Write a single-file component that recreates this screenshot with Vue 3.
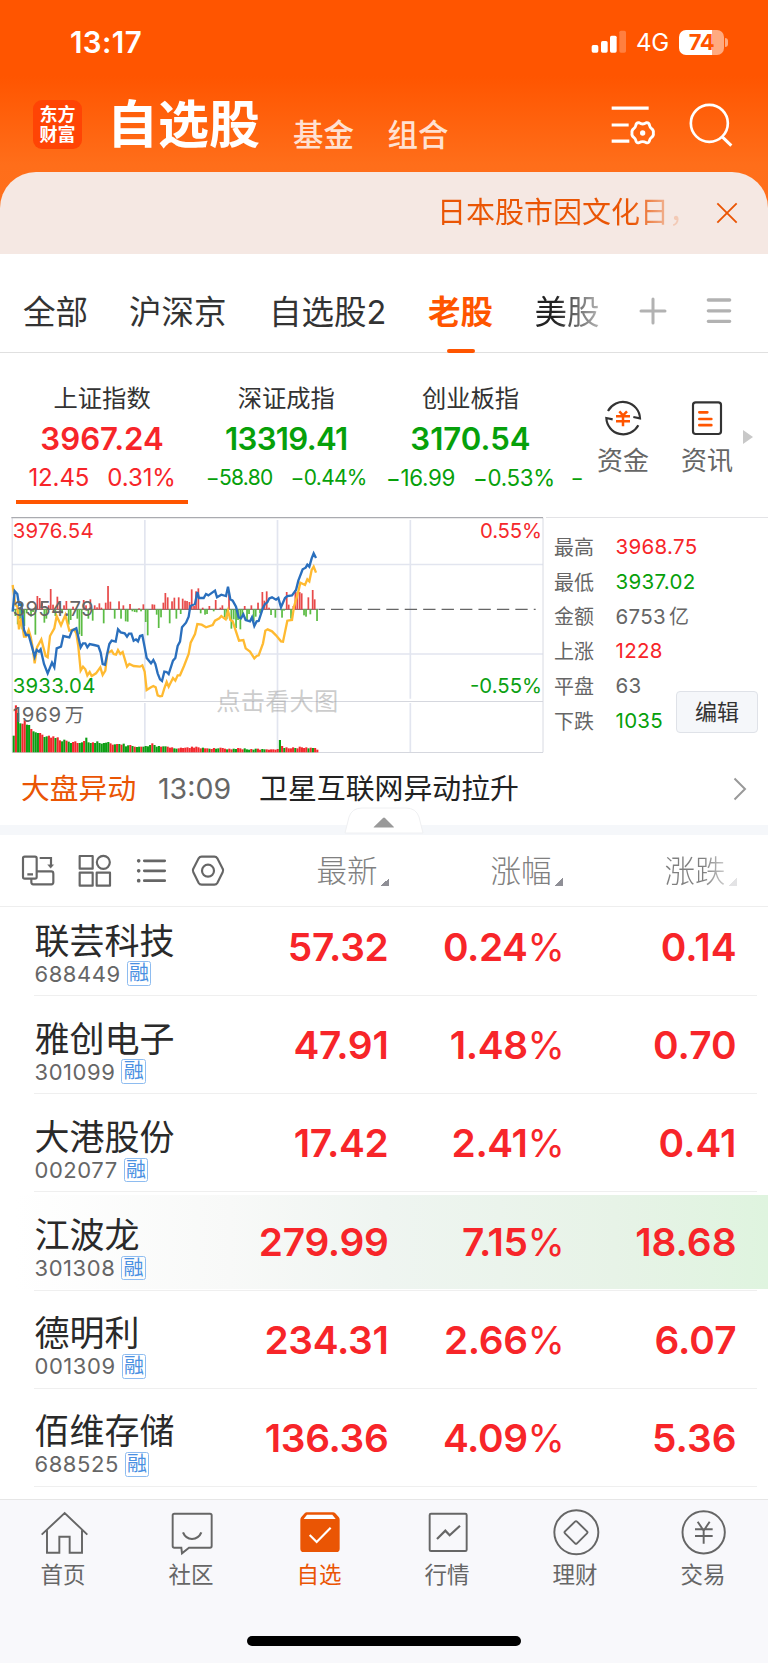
<script setup>
const tabs = [
  { label: '全部', cls: 't1' },
  { label: '沪深京', cls: 't2' },
  { label: '自选股2', cls: 't3' },
  { label: '老股', cls: 't4 active' },
  { label: '美股', cls: 't5 fade' },
]
const indices = [
  { name: '上证指数', value: '3967.24', diff: '12.45', pct: '0.31%', cls: 'up current' },
  { name: '深证成指', value: '13319.41', diff: '−58.80', pct: '−0.44%', cls: 'down small' },
  { name: '创业板指', value: '3170.54', diff: '−16.99', pct: '−0.53%', cls: 'down mid' },
]
const stats = [
  { k: '最高', v: '3968.75', c: 'up' },
  { k: '最低', v: '3937.02', c: 'down' },
  { k: '金额', v: '6753', u: '亿', c: '' },
  { k: '上涨', v: '1228', c: 'up' },
  { k: '平盘', v: '63', c: '' },
  { k: '下跌', v: '1035', c: 'down' },
]
const stocks = [
  { name: '联芸科技', code: '688449', price: '57.32', pct: '0.24', diff: '0.14' },
  { name: '雅创电子', code: '301099', price: '47.91', pct: '1.48', diff: '0.70' },
  { name: '大港股份', code: '002077', price: '17.42', pct: '2.41', diff: '0.41' },
  { name: '江波龙', code: '301308', price: '279.99', pct: '7.15', diff: '18.68', flash: true },
  { name: '德明利', code: '001309', price: '234.31', pct: '2.66', diff: '6.07' },
  { name: '佰维存储', code: '688525', price: '136.36', pct: '4.09', diff: '5.36' },
]

// Intraday chart, drawn in a 3x coordinate space
const blue = '38,305 44,243 52,252 57,285 64,282 72,360 78,375 86,375 104,440 110,420 117,425 122,418 132,462 143,490 156,458 163,472 170,415 183,410 190,378 208,382 216,362 229,355 242,412 249,400 256,400 262,412 269,402 282,405 295,408 302,428 308,462 315,464 322,430 328,402 335,392 347,395 354,358 362,367 374,370 381,380 387,371 394,371 401,392 408,388 414,394 420,378 427,376 434,412 440,444 453,460 460,450 466,462 473,490 480,508 486,513 493,485 500,486 506,492 519,452 526,444 533,408 540,395 546,352 558,338 566,320 571,288 585,282 592,246 597,264 611,264 618,252 625,256 645,242 651,262 664,254 678,258 684,230 691,268 698,272 708,290 716,322 723,325 730,313 737,330 750,334 756,322 763,348 770,334 776,333 789,293 795,282 802,277 808,265 816,262 828,269 835,264 843,292 855,264 862,258 876,256 888,240 895,212 908,178 917,173 922,164 928,170 935,145 941,130 948,144'
const yellow = '38,225 46,285 52,290 57,358 64,325 72,380 78,380 86,360 92,380 98,412 104,460 111,412 124,388 137,438 143,442 150,378 163,355 170,318 183,346 196,315 208,362 222,358 229,370 235,410 242,482 249,470 256,478 262,496 269,486 275,498 288,490 301,472 308,495 316,482 322,430 335,422 341,432 348,434 354,420 361,432 368,426 381,470 388,462 401,468 420,470 427,466 434,485 440,540 453,532 460,528 467,532 473,556 480,559 486,558 493,535 500,516 506,530 519,504 526,512 533,496 540,496 552,468 566,432 572,398 585,372 592,342 605,344 618,352 638,345 645,332 658,325 664,318 677,328 684,302 691,330 698,334 717,392 730,390 737,415 750,425 763,445 770,438 776,436 789,400 796,362 803,358 816,364 828,376 843,394 849,395 862,332 876,330 882,290 895,245 901,218 915,225 922,208 928,214 935,180 941,170 948,188'

const momentum = [
  [46, -20], [53, -45], [60, -30], [67, -60], [73, -50], [80, -12], [93, -22], [99, -8], [106, -76], [112, 40], [119, 34], [126, 20],
  [133, -40], [139, -28], [146, 12], [152, 61], [159, 14], [166, -20], [172, 38], [179, 20], [186, -12], [192, 12], [199, 25], [206, -46],
  [212, -32], [219, 8], [232, -28], [238, -75], [245, -80], [251, 28], [258, 12], [265, -28], [271, 30], [278, -34], [284, 12], [291, 6],
  [298, 18], [304, 5], [311, -42], [317, 20], [324, 70], [331, 23], [344, -28], [357, 24], [363, -28], [370, 12], [377, -36], [383, -37],
  [390, 16], [397, -6], [404, -8], [410, -9], [417, 3], [423, -6], [430, 15], [437, -38], [443, -78], [457, 15], [463, 14], [470, -16],
  [476, -56], [483, -24], [490, 20], [496, 49], [503, 36], [509, -42], [516, 24], [523, 35], [529, -28], [536, 36], [542, -14], [548, 32],
  [555, 26], [561, 25], [568, 22], [575, 60], [582, 10], [588, 54], [595, 63], [602, -12], [608, 5], [615, -16], [621, -14], [628, 10],
  [641, -6], [647, 28], [661, 5], [667, 12], [674, -24], [680, -30], [687, 46], [694, -58], [701, -30], [708, -56], [714, -32], [721, -60],
  [727, -22], [734, 10], [741, -32], [747, -14], [754, 12], [761, -36], [767, -22], [774, 20], [780, -12], [787, 52], [793, 26], [800, 54],
  [807, 5], [813, -17], [826, -25], [846, -25], [852, -4], [860, 52], [866, 14], [873, -28], [880, 10], [886, 58], [892, 52], [899, 52],
  [905, 48], [912, -18], [918, -22], [925, 36], [931, -15], [938, 58], [944, 30], [951, -35],
].map(([x, v]) => ({ x: x - 2.5, y: v > 0 ? 298 - v : 298, h: Math.abs(v), c: v > 0 ? '#e84a4a' : '#5cbc44' }))

// Volume heights; the colour codes run in parallel
const volumeHeights = [50, 141, 118, 87, 86, 96, 83, 82, 70, 63, 60, 58, 58, 53, 46, 48, 50, 44, 48, 43, 45, 36, 33, 38, 35, 32, 28, 31, 33, 28, 28, 30, 34, 44, 30, 28, 30, 28, 33, 28, 26, 28, 29, 31, 27, 23, 24, 25, 25, 23, 26, 18, 21, 22, 19, 17, 16, 17, 17, 17, 19, 18, 22, 27, 22, 17, 19, 17, 18, 18, 17, 14, 15, 12, 11, 12, 14, 13, 14, 15, 13, 17, 14, 17, 15, 12, 14, 12, 12, 11, 10, 13, 11, 12, 14, 13, 11, 9, 11, 9, 11, 10, 13, 12, 9, 12, 9, 8, 10, 8, 11, 11, 8, 10, 9, 9, 8, 9, 9, 8, 10, 37, 19, 13, 15, 12, 12, 15, 13, 12, 17, 15, 13, 15, 12, 14, 13, 13, 8]
const volumeColors = 'grggrrggrgggrrggrrrgrrggrggrrrggrgggrgggggggrrgrgrgggrgrggrggggrgggrggrrrggrrrrrrrrrrrgrrgrrggrrrgrrggrrrgggrggrrggrrrrrrgrgrrrrgrrrrrgrgrrg'
const volume = volumeHeights.map((h, i) => ({
  x: 38 + i * 6.6,
  y: 727 - h,
  h,
  c: volumeColors[i] === 'g' ? '#0b9d12' : '#f2282c',
}))
</script>

<template>
  <div class="page">
    <header class="top">
      <div class="status">
        <span class="clock">13:17</span>
        <div class="signal">
          <svg width="36" height="26" viewBox="0 0 108 78">
            <g fill="#fff">
              <rect x="2" y="48" width="20" height="23" rx="5" />
              <rect x="30" y="36" width="20" height="35" rx="5" />
              <rect x="57" y="20" width="20" height="51" rx="5" />
              <rect x="85" y="5" width="20" height="66" rx="5" opacity=".25" />
            </g>
          </svg>
          <span class="net">4G</span>
          <div class="battery"><b>74</b></div>
          <i class="cap"></i>
        </div>
      </div>
      <div class="titlebar">
        <div class="logo"><span>东方</span><span>财富</span></div>
        <h1>自选股</h1>
        <span class="sub s1">基金</span>
        <span class="sub s2">组合</span>
        <svg class="ic-set" width="46" height="44" viewBox="682 310 138 132" fill="none" stroke="#fff" stroke-width="9.500">
          <path d="M684 325.500H795M684 376H735M684 424.500H737" />
          <path stroke-width="8.500" stroke-linejoin="round" d="M766 369Q777 377 788 369Q796 368 798 378Q799 383 803 386Q811 392 809 400Q811 408 803 414Q799 417 798 421Q796 432 788 429Q777 423 766 429Q758 432 756 421Q755 417 751 414Q743 408 745 400Q743 392 751 386Q755 383 756 378Q758 368 766 369Z" />
          <circle cx="777" cy="400" r="8" fill="#fff" stroke="none" />
        </svg>
        <svg class="ic-search" width="44" height="44" viewBox="916 308 132 132" fill="none" stroke="#fff" stroke-width="8">
          <circle cx="977" cy="369" r="55.500" /><path d="M1015 409L1043 436" stroke-width="9" />
        </svg>
      </div>
    </header>

    <div class="notice">
      <span class="notice-text">日本股市因文化日，</span>
      <svg width="22" height="22" viewBox="0 0 66 66" stroke="#ea5504" stroke-width="5.500"><path d="M4 4L62 62M62 4L4 62" /></svg>
    </div>

    <nav class="tabs">
      <span v-for="t in tabs" :key="t.label" class="tab" :class="t.cls">{{ t.label }}</span>
      <svg class="plus" width="28" height="28" viewBox="0 0 84 84" stroke="#b2b2b2" stroke-width="9" stroke-linecap="round"><path d="M6 42H78M42 6V78" /></svg>
      <svg class="menu" width="26" height="28" viewBox="0 0 78 84" stroke="#b2b2b2" stroke-width="10" stroke-linecap="round"><path d="M7 9H71M7 41.500H71M7 73H71" /></svg>
    </nav>

    <section class="indices">
      <div class="index-list">
        <div v-for="x in indices" :key="x.name" class="index" :class="x.cls">
          <span class="iname">{{ x.name }}</span>
          <b class="ival">{{ x.value }}</b>
          <div class="ichg"><span>{{ x.diff }}</span><span>{{ x.pct }}</span></div>
        </div>
        <div class="index peek down"><div class="ichg"><span>−</span></div></div>
      </div>
      <div class="shortcut sc1">
        <svg width="40" height="40" viewBox="658 414 120 120" fill="none" stroke="#333" stroke-width="6.500">
          <path d="M673 453A51 51 0 0 1 769 475L749 471" />
          <path d="M764 496A51 51 0 0 1 668 474L687 478" />
          <path stroke="#ff5500" stroke-width="7.500" d="M707 454L718 466L730 454M697 469H739M697 484H739M718 466V499" />
        </svg>
        <span>资金</span>
      </div>
      <div class="shortcut sc2">
        <svg width="40" height="40" viewBox="910 414 120 120" fill="none" stroke="#333" stroke-width="6.500">
          <rect x="928" y="427" width="84" height="95" rx="8" />
          <path stroke="#ff5500" stroke-width="8" stroke-linecap="round" d="M947 457H971M947 477H983M947 495.500H983" />
        </svg>
        <span>资讯</span>
      </div>
      <svg class="more" width="10" height="14" viewBox="0 0 10 14"><path d="M0 0L10 7L0 14Z" fill="#c8c8c8" /></svg>
    </section>

    <section class="market">
      <svg class="chart" width="546" height="238" viewBox="0 21 1638 714">
        <g fill="none" stroke="#e2e5ef" stroke-width="5">
          <path d="M36 163.500H1629M36 432H1629" />
          <path d="M434.500 30V566M832.500 30V566M1231 30V566M434.500 579V727M832.500 579V727M1231 579V727" />
          <path d="M36.500 23V727M1629 23V727" stroke="#d8dae2" stroke-width="3" />
          <path d="M36 574.500H1629M36 727.500H1629" stroke="#d5d7de" stroke-width="3" />
        </g>
        <path d="M34 23H1629" stroke="#aaabb0" stroke-width="4" />
        <path d="M38 298H955" stroke="#777" stroke-width="3.500" />
        <path d="M978 298H1629" stroke="#666" stroke-width="3.500" stroke-dasharray="37 18.300" stroke-dashoffset="18.300" transform="translate(-22 0)" />
        <rect v-for="(b, i) in momentum" :key="'m' + i" :x="b.x" :y="b.y" width="5.200" :height="b.h" :fill="b.c" />
        <rect v-for="(b, i) in volume" :key="'v' + i" :x="b.x" :y="b.y" width="6.300" :height="b.h" :fill="b.c" />
        <g fill="none" stroke-width="7" stroke-linejoin="miter">
          <polyline :points="yellow" stroke="#ffba31" />
          <polyline :points="blue" stroke="#2a6fbd" />
        </g>
        <g class="labels" font-size="61">
          <text x="38" y="84" textLength="243" fill="#f5282c">3976.54</text>
          <text x="38" y="319" textLength="243" fill="#666">3954.79</text>
          <text x="38" y="550" textLength="248" fill="#0ba012">3933.04</text>
          <text x="38" y="637" textLength="145" fill="#666">1969</text>
          <text x="194" y="637" font-size="58" fill="#666">万</text>
          <text x="1440" y="84" textLength="186" fill="#f5282c">0.55%</text>
          <text x="1410" y="550" textLength="216" fill="#0ba012">-0.55%</text>
          <text x="649" y="600" font-size="73" textLength="366" fill="#9a9a9a" fill-opacity=".5">点击看大图</text>
        </g>
      </svg>
      <div class="stats">
        <div v-for="s in stats" :key="s.k" class="stat">
          <span class="k">{{ s.k }}</span><span class="v" :class="s.c">{{ s.v }}<em v-if="s.u">{{ s.u }}</em></span>
        </div>
        <button class="edit">编辑</button>
      </div>
    </section>

    <div class="ticker">
      <span class="tk-tag">大盘异动</span>
      <span class="tk-time">13:09</span>
      <span class="tk-text">卫星互联网异动拉升</span>
      <svg width="14" height="24" viewBox="0 0 14 24" fill="none" stroke="#999" stroke-width="2"><path d="M1.500 1.500L12 12L1.500 22.500" /></svg>
    </div>
    <div class="band">
      <svg class="handle" width="80" height="27" viewBox="0 0 80 27">
        <path d="M1 26L5 10Q8 1 18 1H62Q72 1 75 10L79 26Z" fill="#fff" stroke="#eff0f2" stroke-width="1" />
        <path d="M30 19.700Q29 20.500 30 20.500H49.500Q50.500 20.500 49.500 19.500L41 11Q40 10 39 11Z" fill="#999" />
      </svg>
    </div>

    <div class="toolbar">
      <div class="tools">
        <svg width="40" height="70" viewBox="57 255 120 210"><path d="M74 320H105Q110 320 110 325V381Q110 386 105 386H74Q69 386 69 381V325Q69 320 74 320ZM82 373H99M94 388V397Q94 403 100 403H154Q160 403 160 397V371Q160 364 154 364H112M119 324H153V350" /><path d="M143 344L152 355L161 344Z" fill="#666" stroke-width="1" /></svg>
        <svg width="40" height="70" viewBox="225 255 120 210"><path d="M239 318H278V356H239ZM239 368H278V407H239ZM290 368H330V407H290Z" stroke-linejoin="round" /><circle cx="310" cy="337" r="19.500" /></svg>
        <svg width="40" height="70" viewBox="396 255 120 210"><path d="M433 332.500H494M433 362.500H494M433 392H494" stroke-width="8.500" stroke-linecap="round" /><path d="M416 332.500H416.100M416 362.500H416.100M416 392H416.100" stroke-width="11" stroke-linecap="round" /></svg>
        <svg width="40" height="70" viewBox="563 255 120 210"><path d="M604 320H642Q648 320 651 325L667 356Q670 361 667 367L651 399Q648 404 642 404H604Q598 404 595 399L579 367Q576 361 579 356L595 325Q598 320 604 320Z" /><circle cx="623" cy="362" r="18" /></svg>
      </div>
      <div class="col c1">最新<i></i></div>
      <div class="col c2">涨幅<i></i></div>
      <div class="col c3">涨跌<i></i></div>
    </div>

    <main class="list">
      <div v-for="s in stocks" :key="s.code" class="row" :class="{ flash: s.flash }">
        <div class="who">
          <span class="name">{{ s.name }}</span>
          <div class="meta"><span class="code">{{ s.code }}</span><span class="badge">融</span></div>
        </div>
        <b class="num n1">{{ s.price }}</b>
        <b class="num n2">{{ s.pct }}<span class="pc">%</span></b>
        <b class="num n3">{{ s.diff }}</b>
      </div>
    </main>

    <footer class="bottom">
      <div class="navs">
        <div class="nav">
          <svg viewBox="0 30 384 180"><path d="M125 134L194 69L262 134M141 121V188H178V140H209V188H246V121" /></svg><span>首页</span>
        </div>
        <div class="nav">
          <svg viewBox="0 30 384 180"><path d="M139 71H246Q251 71 251 76V168Q251 173 246 173H183L162 190L160 173H139Q134 173 134 168V76Q134 71 139 71Z" /><path d="M165 127Q173 146 192 147Q212 146 220 127" stroke-width="6.500" /></svg><span>社区</span>
        </div>
        <div class="nav on">
          <svg viewBox="0 30 384 180"><path d="M152 67H231Q235 67 238 70L248 81Q251 84 251 90V176Q251 186 241 186H143Q133 186 133 176V90Q133 84 136 81L146 70Q149 67 152 67Z" fill="#ea5504" stroke="none" /><path d="M153 74H229L239 87H143Z" fill="#fff" stroke="none" /><path d="M161 135L182 156L224 113" stroke="#fff" stroke-width="6.500" /></svg><span>自选</span>
        </div>
        <div class="nav">
          <svg viewBox="0 30 384 180"><rect x="137" y="71" width="111" height="112" rx="4" /><path d="M159 147L184 122L197 136L228 107" stroke-width="6.500" /></svg><span>行情</span>
        </div>
        <div class="nav">
          <svg viewBox="0 30 384 180"><circle cx="193" cy="127" r="66" /><path d="M189 95Q192 92 195 95L225 124Q228 127 225 130L195 160Q192 163 189 160L159 130Q156 127 159 124Z" /></svg><span>理财</span>
        </div>
        <div class="nav">
          <svg viewBox="0 30 384 180"><circle cx="191" cy="127" r="63.500" /><path d="M173 95L191 122L209 95M165 118H218M165 138H218M191 122V161" /></svg><span>交易</span>
        </div>
      </div>
      <div class="home"></div>
    </footer>
  </div>
</template>

<style>
body {
  background: #fff;
}
</style>

<style scoped>
.page {
  width: 768px;
  height: 1663px;
  display: flex;
  flex-direction: column;
  overflow: hidden;
  background: #fff;
  color: #333;
  font-family: Inter, "Noto Sans CJK SC", sans-serif;
  font-weight: 400;
  white-space: nowrap;
}
.page * { box-sizing: border-box; }
svg { display: block; flex: none; }
.up { color: #f72529; }
.down { color: #06a00a; }

.top {
  flex: none;
  height: 215px;
  margin-bottom: -43.500px;
  background: linear-gradient(#ff5500 0, #ff5500 76px, #ff6e1a 165px, #ff701c 215px);
  color: #fff;
}
.status { height: 84px; display: flex; align-items: center; justify-content: space-between; padding: 0 44px 0 70px; }
.clock { font-size: 29.500px; font-weight: 600; letter-spacing: .4px; }
.signal { display: flex; align-items: center; }
.net { font-size: 24px; margin-left: 9px; width: 33px; font-weight: 400; letter-spacing: -.3px; line-height: 26px; padding-top: 2px; }
.battery {
  width: 45px; height: 25px; margin-left: 10px; border-radius: 7px;
  background: linear-gradient(90deg, #fff 33px, #ffaa80 33px);
  color: #ff5500; font-size: 22px; line-height: 25px; text-align: center; letter-spacing: -.5px;
}
.battery b { font-weight: 700; }
.cap { width: 3px; height: 9px; margin-left: 1px; margin-right: -4px; border-radius: 0 4px 4px 0; background: #ffaa80; }
.titlebar { display: flex; height: 88px; padding-left: 33px; align-items: flex-start; }
.logo {
  width: 49px; height: 49px; margin-top: 16px; border-radius: 9px; background: #ff4405;
  display: flex; flex-direction: column; align-items: center; justify-content: center;
}
.logo span { font-size: 18px; line-height: 20px; font-weight: 700; }
h1 { margin: 11px 0 0 25px; width: 161px; font-size: 51px; line-height: 60px; font-weight: 700; letter-spacing: 0; }
.sub { font-size: 30.500px; line-height: 40px; margin-top: 31px; color: #ffe1d2; font-weight: 500; }
.s1 { margin-left: 25px; width: 94.500px; }
.s2 { width: 61px; }
.ic-set { margin: 19px 0 0 162.500px; }
.ic-search { margin: 19px 0 0 32px; }

.notice {
  flex: none; height: 82px; border-radius: 36px 36px 0 0; background: #f5e8e3;
  display: flex; align-items: center; padding-left: 437px;
}
.notice-text {
  width: 262px; margin-right: 17px; font-size: 29px; line-height: 40px; font-weight: 400;
  color: transparent; background: linear-gradient(90deg, #ea5504 195px, rgba(234, 85, 4, .2) 238px); background-clip: text;
}

.tabs { flex: none; height: 99px; border-bottom: 1px solid #e0e0e0; display: flex; align-items: flex-start; padding-left: 23px; }
.tab { font-size: 32.500px; line-height: 44px; margin-top: 37px; height: 62px; color: #333; }
.t1 { width: 106px; }
.t2 { width: 140px; }
.t3 { width: 159px; }
.t4 { width: 106.500px; }
.t5 { width: 66px; }
.active { color: #ff5500; font-weight: 700; position: relative; }
.active::after { content: ""; position: absolute; left: 19px; bottom: 0; width: 28px; height: 4px; border-radius: 2px; background: #ff5500; }
.fade { color: transparent; background: linear-gradient(90deg, #222 20px, #bbb 66px); background-clip: text; }
.plus { margin: 43.500px 0 0 38.500px; }
.menu { margin: 43.500px 0 0 38.500px; }

.indices { flex: none; height: 164.500px; display: flex; }
.index-list { width: 583px; display: flex; overflow: hidden; padding-left: 10px; }
.index { width: 184.200px; flex: none; display: flex; flex-direction: column; align-items: center; height: 152px; padding-top: 29px; }
.current { background: linear-gradient(#ff5500, #ff5500) 6px 147.500px / 172px 4px no-repeat; }
.iname { font-size: 24.300px; line-height: 32px; color: #333; }
.ival { font-size: 31.200px; line-height: 38px; margin-top: 6px; font-weight: 600; }
.ichg { display: flex; gap: 18px; font-size: 24px; line-height: 30px; margin-top: 5px; }
.current .ichg { letter-spacing: -.1px; }
.small .ival { letter-spacing: -.7px; }
.small .ichg { font-size: 21px; letter-spacing: -.7px; }
.mid .ichg { font-size: 22.300px; letter-spacing: -.3px; }
.peek { align-items: flex-start; width: 30px; padding: 105px 0 0 8px; }
.peek .ichg { font-size: 20px; }
.shortcut { display: flex; flex-direction: column; align-items: center; width: 80px; padding-top: 45.500px; }
.shortcut span { font-size: 26px; line-height: 34px; margin-top: 6px; color: #666; }
.sc2 { margin-left: 4px; }
.more { margin: 77px 0 0 -4px; }

.market { flex: none; height: 237px; display: flex; }
.chart text { font-family: Inter, "Noto Sans CJK SC", sans-serif; }
.stats { flex: 1; position: relative; border-top: 1px solid #e3e3e6; padding: 11px 0 0 8px; }
.stat { display: flex; height: 34.800px; align-items: center; font-size: 20px; color: #666; }
.k { width: 61.500px; }
.v { font-size: 20.500px; letter-spacing: .3px; }
.v em { font-style: normal; margin-left: 3px; font-size: 20px; }
.edit {
  position: absolute; left: 130px; top: 173px; width: 82px; height: 42px; padding: 0; border: 1.500px solid #dfe2e8;
  border-radius: 4px; background: #f5f7fa; color: #333; font: 400 22px/36px Inter, "Noto Sans CJK SC", sans-serif;
}

.ticker { flex: none; height: 71px; display: flex; align-items: center; padding: 0 0 2px 21px; line-height: 40px; }
.tk-tag { font-size: 28.800px; width: 137px; color: #ea5504; }
.tk-time { font-size: 28.500px; width: 101px; color: #666; }
.tk-text { font-size: 28.900px; width: 474px; color: #222; }
.band { flex: none; height: 10px; background: #f5f7fa; position: relative; }
.handle { position: absolute; left: 344px; top: -18.500px; }

.toolbar { flex: none; height: 71.500px; border-bottom: 1px solid #eee; display: flex; padding-left: 19px; }
.tools { display: flex; gap: 16.300px; width: 297.500px; flex: none; }
.tools svg { fill: none; stroke: #666; stroke-width: 6.500; }
.col { flex: none; width: 174px; font-size: 30.500px; line-height: 40px; padding-top: 16px; color: #808080; display: flex; font-weight: 300; }
.col i { width: 8px; height: 8px; margin: 27px 0 0 3px; background: linear-gradient(135deg, transparent 50%, #8f8f96 50%); }
.c3 { width: 90px; color: transparent; background: linear-gradient(90deg, #808080 38px, #d8d8d8 64px); background-clip: text; }
.c3 i { opacity: .25; }

.list { flex: 1; overflow: hidden; }
.row {
  height: 98.200px; display: flex; position: relative; padding-left: 34.500px;
  background: linear-gradient(#efefef, #efefef) 34px 97px / 723px 1px no-repeat;
}
.row:first-child { margin-top: -8.500px; }
.flash {
  background: linear-gradient(#efefef, #efefef) 34px 97px / 723px 1px no-repeat,
    linear-gradient(90deg, #fff 2%, #f8f9f8 30%, #eff5f1 50%, #e7f3e7 80%, #dff4df 100%) 0 2px / 768px 94px no-repeat;
}
.who { width: 180px; padding-top: 19.500px; }
.name { display: block; font-size: 35px; line-height: 46px; height: 43px; color: #2a2a2a; }
.meta { display: flex; align-items: center; height: 26px; }
.code { font-size: 22px; line-height: 26px; color: #666; letter-spacing: .55px; }
.badge {
  width: 24.500px; height: 24.500px; margin-left: 6px; border: 1.500px solid #8ebcf0; border-radius: 2.500px;
  color: #4a90e2; font-size: 20px; line-height: 22.500px; display: flex; justify-content: center;
}
.num { font-size: 38.800px; line-height: 48px; margin-top: 25px; text-align: right; color: #f72529; font-weight: 600; letter-spacing: -.3px; }
.n1 { width: 174px; }
.n2 { width: 176px; letter-spacing: -.4px; }
.n3 { width: 172px; letter-spacing: 0; }
.pc { font-weight: 400; font-size: 38px; }

.bottom { flex: none; height: 164px; background: #f8f8fb; border-top: 1.500px solid #e6e6e6; }
.navs { display: flex; margin-left: -.500px; }
.nav { width: 128px; text-align: center; color: #666; }
.nav svg { width: 128px; height: 60px; fill: none; stroke: #666; stroke-width: 5.800; margin-top: -.500px; }
.nav span { display: block; font-size: 22.500px; line-height: 30px; margin-left: -1px; }
.nav.on { color: #ea5504; }
.home { width: 274px; height: 10.500px; border-radius: 6px; background: #000; margin: 46px auto 0; }
</style>
